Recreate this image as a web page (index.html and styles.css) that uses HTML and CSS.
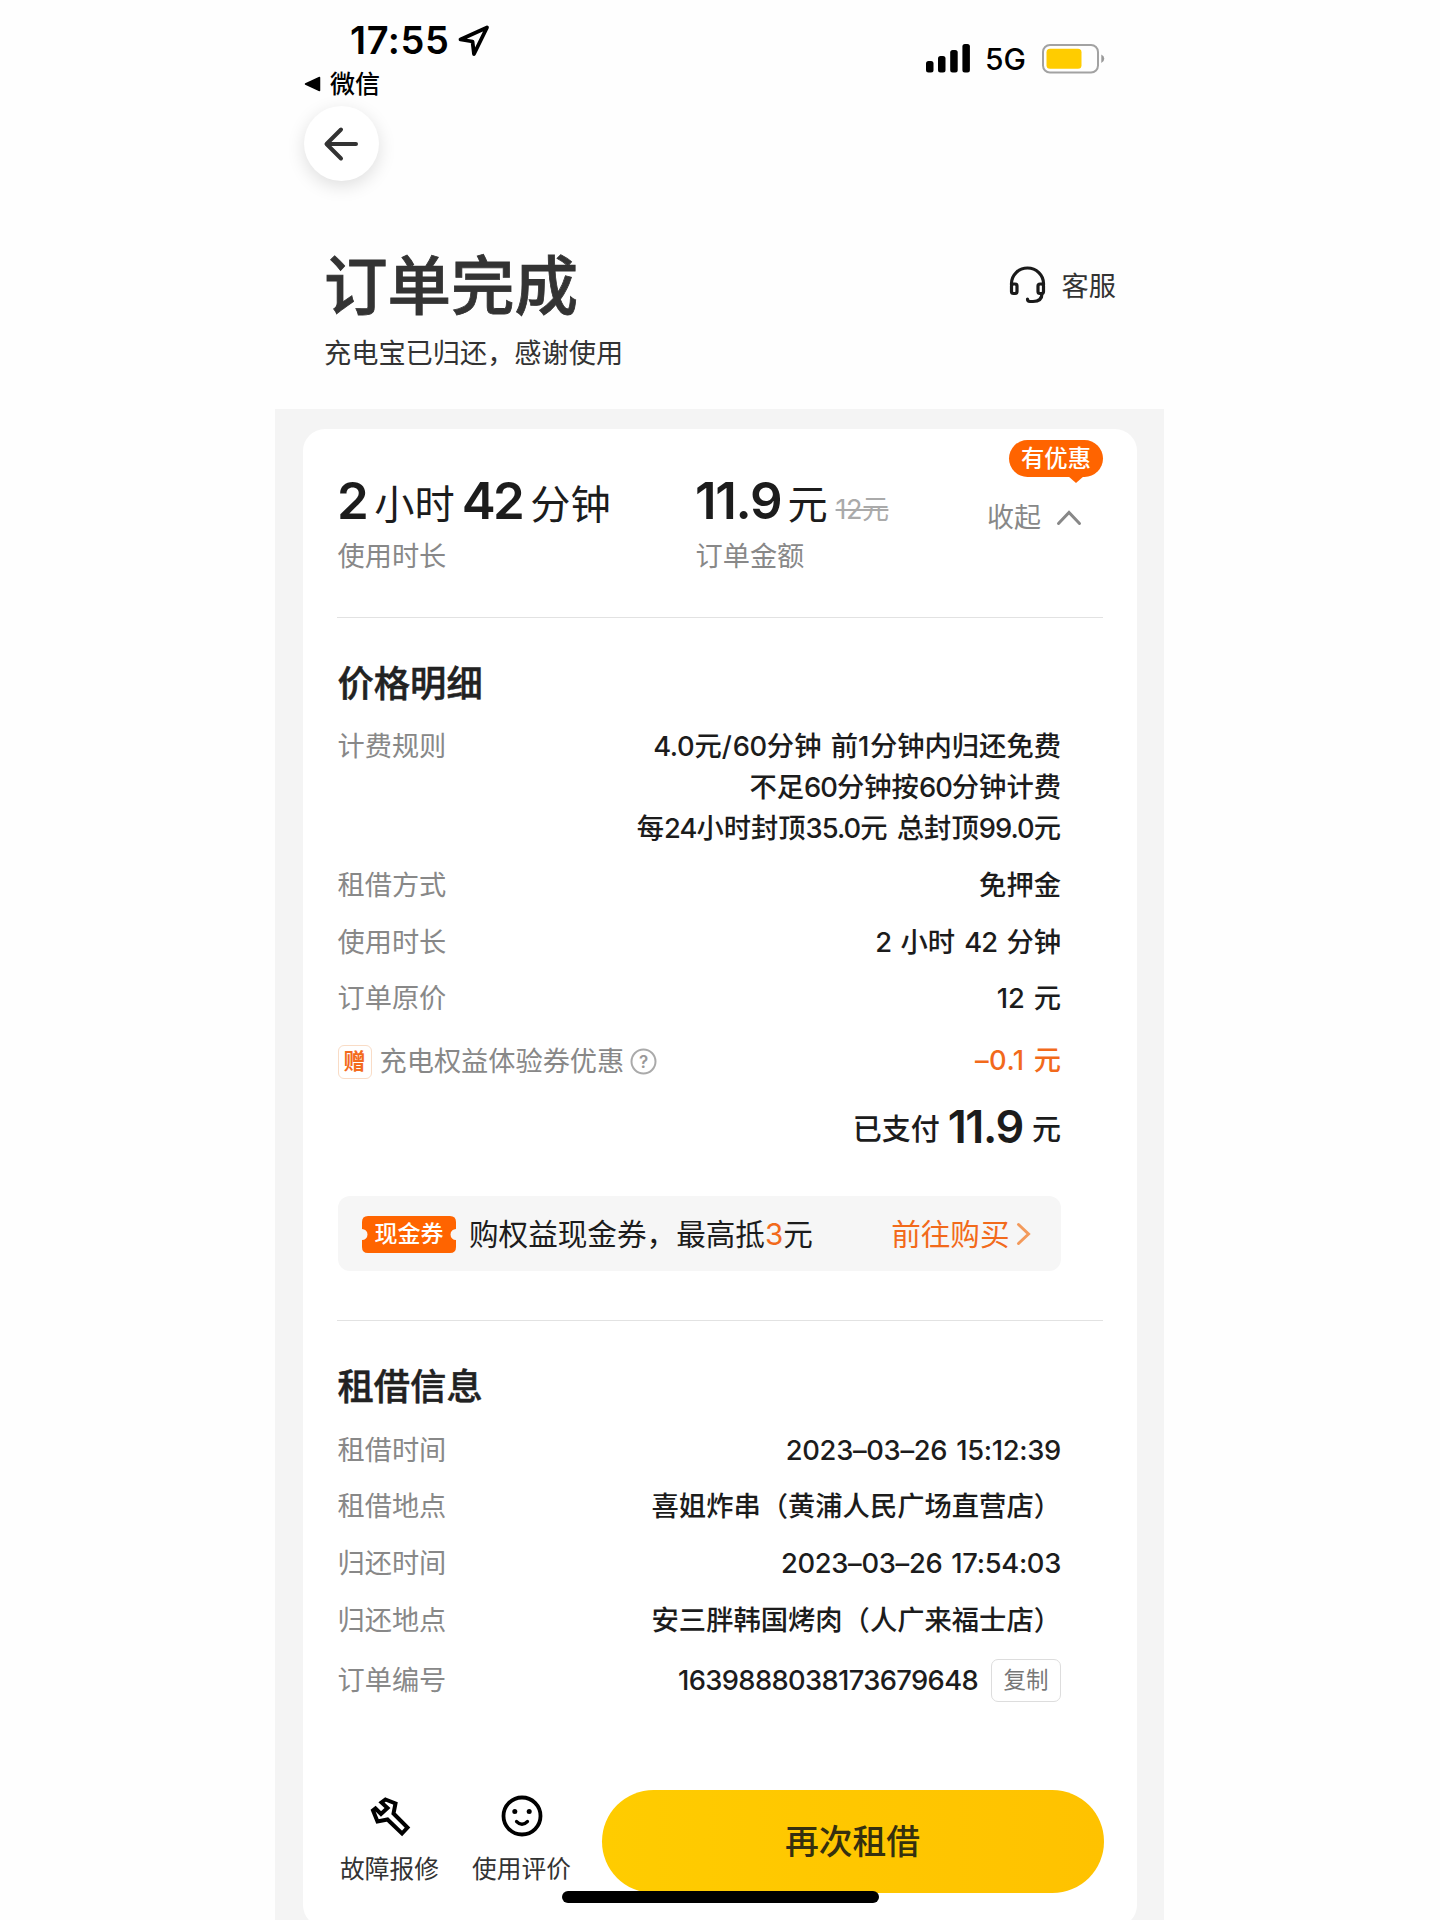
FILE: index.html
```html
<!DOCTYPE html>
<html lang="zh-CN">
<head>
<meta charset="utf-8">
<title>订单完成</title>
<link rel="stylesheet" href="styles.css">
</head>
<body>
<div class="phone">
  <header class="status">
    <div class="status-left">
      <div class="clock"><span class="time">17:55</span>
        <svg class="locate" width="34" height="34" viewBox="0 0 34 34"><path d="M30 3.500 3.500 15.500l12 2 1.500 12.500z" fill="none" stroke="#000" stroke-width="3.800" stroke-linejoin="round"/></svg>
      </div>
      <div class="return"><svg width="17" height="16" viewBox="0 0 17 16"><path d="M1.5 8 15.5 1.5v13z" stroke="#000" stroke-width="1.5" stroke-linejoin="round"/></svg><span>微信</span></div>
    </div>
    <div class="status-right">
      <svg width="44" height="29" viewBox="0 0 44 29"><rect y="17" width="7.5" height="11.500" rx="2.500"/><rect x="12" y="12" width="7.500" height="16.500" rx="2.500"/><rect x="24.200" y="6" width="7.500" height="22.500" rx="2.500"/><rect x="36.400" y="0" width="7.500" height="28.500" rx="2.500"/></svg>
      <span class="network">5G</span>
      <svg width="63" height="30" viewBox="0 0 63 30"><rect x="1" y="1" width="55" height="27.500" rx="7" fill="none" stroke="#a2a2a2" stroke-width="2"/><rect x="4.500" y="4.800" width="35" height="20" rx="3.500" fill="#fc0"/><path d="M59.300 10.500q3 1.500 3 4.200t-3 4.200z" fill="#999"/></svg>
    </div>
  </header>
  <button class="back" aria-label="返回"><svg width="38" height="38" viewBox="0 0 38 38"><path d="M19 4.500 4.500 19 19 33.500M5 19h29" fill="none" stroke="#333" stroke-width="4" stroke-linecap="round" stroke-linejoin="round"/></svg></button>
  <section class="heading">
    <div>
      <h1>订单完成</h1>
      <p>充电宝已归还，感谢使用</p>
    </div>
    <a class="service"><svg width="38" height="38" viewBox="0 0 38 38" fill="none" stroke="#1a1a1a" stroke-width="3.200"><path d="M2.500 19v-1.500a16 15.500 0 0 1 32 0v1.500"/><rect x="2.500" y="18" width="5.500" height="9.500" rx="2"/><rect x="29" y="18" width="5.500" height="9.500" rx="2"/><path d="M33 27.500c0 6-4 8-9 8h-3q-2.500 0-2.500-2.500" stroke-linecap="round"/></svg><span>客服</span></a>
  </section>
  <main>
    <article class="card">
      <section class="summary">
        <div class="duration">
          <div class="figure"><b>2</b><i>小时</i><b>42</b><i>分钟</i></div>
          <div class="label">使用时长</div>
        </div>
        <div class="amount">
          <div class="figure"><b>11.9</b><i>元</i><del>12元</del></div>
          <div class="label">订单金额</div>
        </div>
        <div class="fold">
          <span class="bubble">有优惠</span>
          <div class="collapse"><span>收起</span><svg width="26" height="16" viewBox="0 0 26 16"><path d="m2.500 13.500 10.500-11 10.500 11" fill="none" stroke="#888" stroke-width="3" stroke-linecap="round"/></svg></div>
        </div>
      </section>
      <section class="details">
        <h2>价格明细</h2>
        <dl>
          <div class="row"><dt>计费规则</dt><dd><s class="date">4.0</s>元<s class="slash">/</s><s class="date">60</s>分钟 前<s class="one">1</s>分钟内归还免费<br>不足<s>60</s>分钟按<s>60</s>分钟计费<br>每<s>24</s>小时封顶<s>35.0</s>元 总封顶<s>99.0</s>元</dd></div>
          <div class="row"><dt>租借方式</dt><dd>免押金</dd></div>
          <div class="row"><dt>使用时长</dt><dd><s>2</s> 小时 <s>42</s> 分钟</dd></div>
          <div class="row"><dt>订单原价</dt><dd><s class="date">12</s> 元</dd></div>
          <div class="row gift"><dt><em>赠</em><span>充电权益体验券优惠</span><svg width="27" height="27" viewBox="0 0 27 27"><circle cx="13.500" cy="13.500" r="12" fill="none" stroke="#aaa" stroke-width="2"/><text x="13.500" y="19.500" text-anchor="middle">?</text></svg></dt><dd><s class="loose">–0.1</s> 元</dd></div>
        </dl>
        <div class="paid"><span>已支付</span><b>11.9</b><span>元</span></div>
        <div class="coupon">
          <span class="ticket"><svg width="94" height="37" viewBox="0 0 94 37"><path d="M6 0h82q6 0 6 6v7a5.500 5.500 0 0 0 0 11v7q0 6-6 6H6q-6 0-6-6v-7a5.500 5.500 0 0 0 0-11V6q0-6 6-6z" fill="#ff6400"/></svg><span>现金券</span></span>
          <span class="offer">购权益现金券，最高抵<mark>3</mark>元</span>
          <a class="buy"><span>前往购买</span><svg width="15" height="24" viewBox="0 0 15 24"><path d="m2.500 2.500 10 9.500-10 9.500" fill="none" stroke="#f39a5b" stroke-width="3" stroke-linecap="round"/></svg></a>
        </div>
      </section>
      <section class="rental">
        <h2>租借信息</h2>
        <dl>
          <div class="row"><dt>租借时间</dt><dd><s class="date">2023–03–26 15:12:39</s></dd></div>
          <div class="row"><dt>租借地点</dt><dd>喜姐炸串（黄浦人民广场直营店）</dd></div>
          <div class="row"><dt>归还时间</dt><dd><s class="date">2023–03–26 17:54:03</s></dd></div>
          <div class="row"><dt>归还地点</dt><dd>安三胖韩国烤肉（人广来福士店）</dd></div>
          <div class="row number"><dt>订单编号</dt><dd><s class="serial">1639888038173679648</s><button class="copy">复制</button></dd></div>
        </dl>
      </section>
      <footer class="actions">
        <a class="tool"><svg width="42" height="42" viewBox="0 0 42 42"><path d="M16.500 4.500 26.500 8.500 24.500 18.500 38.500 32.500 33 38.500 18.500 24.500 8.500 26.500 4 15.500 6.500 13.500 12 19 18.500 13 12.500 7.500z" fill="none" stroke="#000" stroke-width="4"/></svg><span>故障报修</span></a>
        <a class="tool"><svg width="42" height="42" viewBox="0 0 42 42"><circle cx="21" cy="21" r="18.500" fill="none" stroke="#000" stroke-width="3.800"/><circle cx="13.800" cy="16.500" r="2.500"/><circle cx="28.200" cy="16.500" r="2.500"/><path d="M15.500 26.500q5.500 5.500 11 0" fill="none" stroke="#000" stroke-width="3.200" stroke-linecap="round"/></svg><span>使用评价</span></a>
        <button class="again">再次租借</button>
      </footer>
    </article>
  </main>
  <div class="home-bar"></div>
</div>
</body>
</html>
```
FILE: styles.css
```css
* { box-sizing: border-box; margin: 0; padding: 0; }
body { height: 1920px; overflow: hidden; background: #fefefe; font-family: Inter, "Noto Sans CJK SC", sans-serif; color: #1c1c1c; }
svg { display: block; flex: none; }
button { border: 0; font: inherit; color: inherit; }
i, em { font-style: normal; }

/* Numerals set inside Chinese text */
s { text-decoration: none; letter-spacing: -0.035em; }
s.loose { letter-spacing: 0.015em; }
s.slash { letter-spacing: 0.03em; }
s.one { letter-spacing: 0.02em; }
s.date { letter-spacing: -0.011em; }
s.serial { letter-spacing: -0.023em; }

.phone { position: relative; width: 889px; height: 1920px; margin-left: 275px; overflow: hidden; }

/* Status bar */
.status { display: flex; justify-content: space-between; height: 106px; padding: 20px 59px 0 29px; color: #000; }
.clock { display: flex; align-items: center; height: 41px; padding-left: 46px; }
.time { font-size: 38px; font-weight: 600; line-height: 41px; width: 107px; letter-spacing: 0.015em; }
.return { display: flex; align-items: center; gap: 9px; height: 46px; font-size: 25px; font-weight: 500; line-height: 46px; }
.status-right { display: flex; align-items: center; height: 77px; }
.network { width: 72px; padding: 2px 0 0 15px; font-size: 30px; font-weight: 500; line-height: 77px; }

.back { display: flex; align-items: center; justify-content: center; width: 75px; height: 75px; margin-left: 28.500px; border-radius: 50%; background: #fff; box-shadow: 0 5px 18px rgba(0, 0, 0, .13); }

/* Title */
.heading { display: flex; justify-content: space-between; height: 228px; padding: 64px 48px 0 49px; color: #333; }
.heading h1 { font-size: 63.5px; font-weight: 500; line-height: 80px; padding-top: 1px; -webkit-text-stroke: 0.8px #333; }
.heading p { font-size: 27.2px; line-height: 40px; margin-top: 8px; }
.service { display: flex; align-items: center; gap: 15px; height: 79px; font-size: 27.2px; }
.service span { padding-bottom: 1px; }

/* Card */
main { height: 1511px; padding: 20px 27px 0 28px; background: #f4f4f4; }
.card { height: 1498px; padding: 0 34px; border-radius: 22px; background: #fff; }
.summary { display: flex; height: 189px; padding-top: 41px; border-bottom: 1px solid #e2e2e2; }
.duration { width: 358px; }
.amount { width: 230px; }
.figure { display: flex; align-items: baseline; height: 66px; line-height: 62px; white-space: nowrap; }
.figure b { font-size: 51px; font-weight: 600; letter-spacing: -0.05em; }
.figure i { font-size: 40.200px; margin: 0 7px 0 8px; }
.figure del { font-size: 27px; color: #aaa; letter-spacing: -0.02em; }
.amount b { letter-spacing: -0.025em; }
.amount i { margin-left: 6px; margin-right: 8px; }
.label, dt { padding-left: 0.5px; font-size: 27.2px; color: #888; line-height: 41px; }
dt { height: 41px; }
.fold { display: flex; flex: 1; flex-direction: column; align-items: flex-end; margin-top: -30px; }
.bubble { position: relative; width: 94px; height: 37px; border-radius: 19px; background: #ff6400; color: #fff; font-size: 23.3px; font-weight: 500; line-height: 37px; text-align: center; }
.bubble::after { content: ""; position: absolute; left: 59px; top: 36px; border: 8px solid transparent; border-top: 7px solid #ff6400; border-bottom: 0; }
.collapse { display: flex; align-items: center; gap: 15px; margin: 20px 21px 0 0; font-size: 27px; color: #888; line-height: 41px; }

.details { height: 703px; padding-top: 40px; border-bottom: 1px solid #e2e2e2; }
.rental { height: 440px; padding-top: 40px; }
h2 { padding-left: 0.5px; font-size: 36.300px; font-weight: 500; line-height: 52px; color: #222; -webkit-text-stroke: 0.5px #222; }
dl { display: flex; flex-direction: column; gap: 15.8px; padding: 16px 42px 0 0; }
.rental dl { padding-top: 16.600px; }
.row { display: flex; justify-content: space-between; line-height: 41px; }
dd { font-size: 27.3px; font-weight: 500; text-align: right; white-space: pre; word-spacing: 2px; }
.gift { margin-top: 5px; align-items: center; }
.gift dt { display: flex; align-items: center; padding-top: 2px; }
.gift em { width: 34px; height: 34px; margin-right: 8px; border: 1.500px solid #f9dcc6; border-radius: 6px; color: #f36b1c; font-size: 22px; font-weight: 700; line-height: 30px; text-align: center; }
.gift svg { margin-left: 6px; }
.gift text { font-size: 17px; font-weight: 600; fill: #999; }
.gift dd { color: #f26a1b; }
.paid { display: flex; align-items: baseline; justify-content: flex-end; height: 60px; margin: 16px 42px 0 0; line-height: 60px; font-size: 29px; font-weight: 500; }
.paid span { position: relative; top: -3px; }
.paid b { margin: 0 9px 0 8px; font-size: 45px; font-weight: 600; letter-spacing: -0.03em; }

.coupon { display: flex; align-items: center; width: 723px; height: 75px; margin: 39px 0 0 0.500px; padding: 0 30px 0 24.500px; border-radius: 12px; background: #f6f6f6; font-size: 29.6px; }
.ticket { display: grid; margin: 1px 13px 0 0; color: #fff; font-size: 23px; font-weight: 500; line-height: 37px; text-align: center; }
.ticket > * { grid-area: 1 / 1; }
.offer { flex: 1; padding-bottom: 3px; }
.offer mark { background: none; color: #f26a1b; }
.buy { display: flex; align-items: center; gap: 6px; color: #f26a1b; }
.buy span { padding-bottom: 3px; }

.number { align-items: center; margin-top: 1px; height: 45px; }
.number dd { display: flex; align-items: center; gap: 13px; }
.copy { width: 70px; height: 43px; border: 1.500px solid #ddd; border-radius: 7px; background: #fff; color: #777; font-size: 22.500px; font-weight: 400; line-height: 36px; }

/* Bottom actions */
.actions { display: flex; height: 145px; padding: 29px 0 0 0.500px; }
.tool { display: flex; flex-direction: column; align-items: center; flex: none; width: 104px; margin-right: 28px; padding-top: 5px; font-size: 24.700px; line-height: 36px; color: #333; }
.tool span { margin-top: 14px; white-space: nowrap; }
.again { flex: none; width: 502px; height: 103px; border-radius: 52px; background: linear-gradient(90deg, #fc0, #ffc200); color: #35300f; font-size: 33.800px; font-weight: 500; line-height: 101px; }
.home-bar { position: absolute; left: 287px; top: 1891px; width: 317px; height: 12px; border-radius: 6px; background: #000; }
```
